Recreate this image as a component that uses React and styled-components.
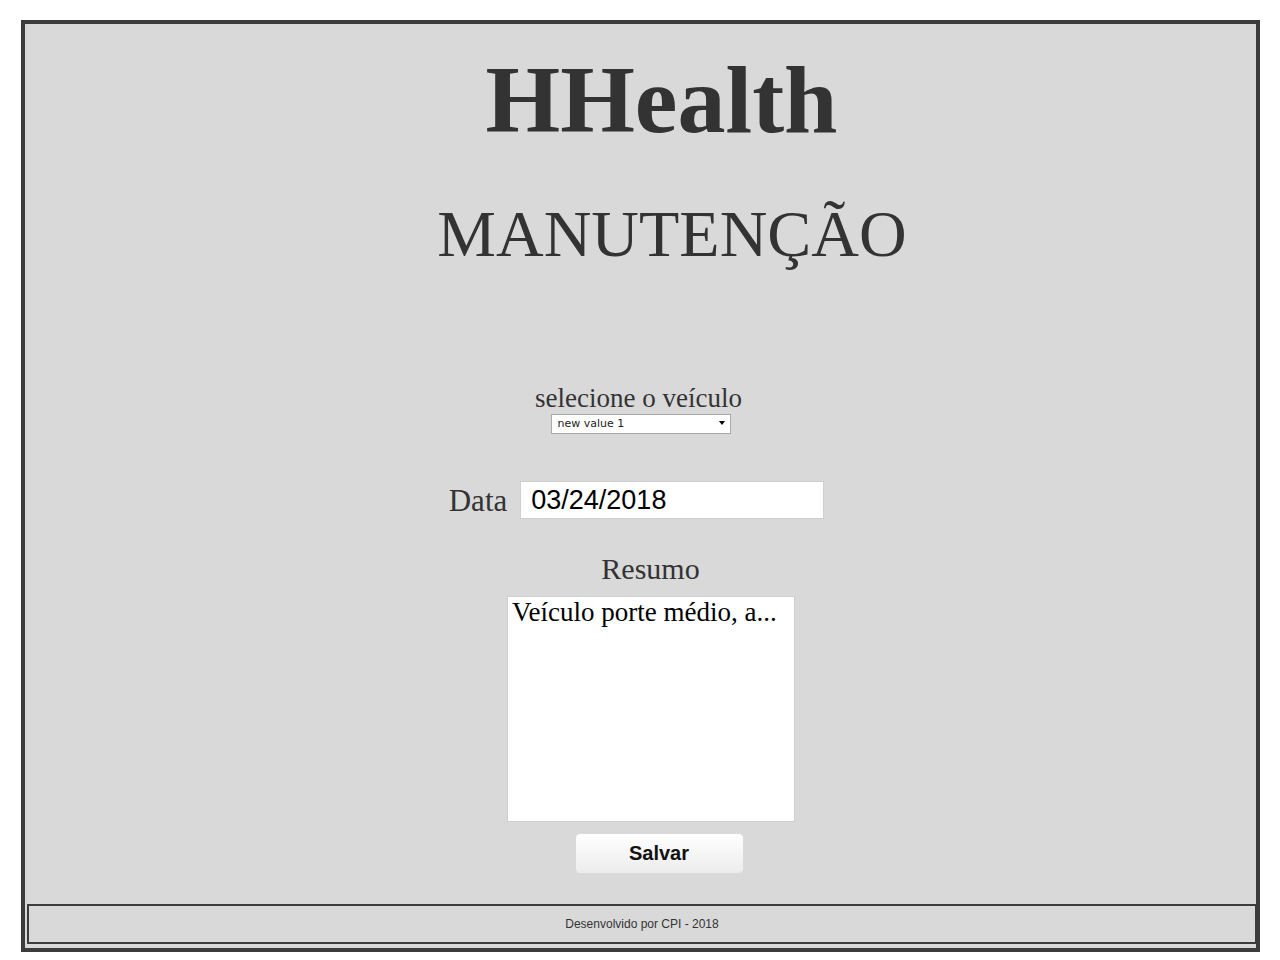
import React from "react";
import styled, { createGlobalStyle } from "styled-components";

const Global = createGlobalStyle`
  html, body { margin: 0; padding: 0; background: #ffffff; }
  body { font-family: "Liberation Serif", "Times New Roman", serif; }
  * { box-sizing: border-box; }
`;

const Frame = styled.div`
  margin: 20px 0 8px 21px;
  width: 1239px;
  height: 932px;
  border: 4px solid #3c3c3c;
  background: #d9d9d9;
  display: flex;
  flex-direction: column;
`;

const Main = styled.main`
  flex: 1;
  display: flex;
  flex-direction: column;
  align-items: center;
  text-align: center;
`;

const Title = styled.h1`
  margin: 28px 0 0;
  padding-left: 42px;
  font-family: "Liberation Serif", "Times New Roman", serif;
  font-weight: 700;
  font-size: 96px;
  line-height: 96px;
  color: #333333;
`;

const Subtitle = styled.h2`
  margin: 53px 0 0;
  padding-left: 63px;
  font-family: "Liberation Serif", "Times New Roman", serif;
  font-weight: 400;
  font-size: 66px;
  line-height: 66px;
  color: #333333;
`;

const FieldLabel = styled.label`
  display: block;
  font-family: "Liberation Serif", "Times New Roman", serif;
  font-size: ${(p) => p.$size}px;
  line-height: ${(p) => p.$size}px;
  color: #333333;
  margin-top: ${(p) => p.$top || 0}px;
  padding-left: ${(p) => p.$pl || 0}px;
  padding-right: ${(p) => p.$pr || 0}px;
`;

const SelectWrap = styled.div`
  position: relative;
  margin-top: 1px;
  width: 180px;
  height: 20px;
`;

const Select = styled.select`
  appearance: none;
  -webkit-appearance: none;
  width: 180px;
  height: 20px;
  border: 1px solid #a9a9a9;
  background: #ffffff;
  padding: 0 0 0 6px;
  font-family: "DejaVu Sans", Verdana, sans-serif;
  font-size: 11px;
  color: #222222;
  outline: none;
`;

const Arrow = styled.span`
  position: absolute;
  right: 6px;
  top: 8px;
  width: 0;
  height: 0;
  border-left: 3.5px solid transparent;
  border-right: 3.5px solid transparent;
  border-top: 4px solid #000000;
  pointer-events: none;
`;

const DateRow = styled.div`
  display: flex;
  align-items: center;
  gap: 13px;
  margin-top: 48px;
  padding-right: 8px;
`;

const DateInput = styled.input`
  width: 304px;
  height: 38px;
  border: 1px solid #cfcfcf;
  background: #ffffff;
  padding: 0 10px;
  font-family: "Liberation Sans", Arial, sans-serif;
  font-size: 27px;
  color: #000000;
  outline: none;
`;

const Summary = styled.textarea`
  margin-top: 12px;
  margin-left: 21px;
  width: 288px;
  height: 226px;
  border: 1px solid #cfcfcf;
  background: #ffffff;
  padding: 0 4px;
  resize: none;
  font-family: "Liberation Serif", "Times New Roman", serif;
  font-size: 27px;
  line-height: 30px;
  color: #000000;
  outline: none;
`;

const SaveButton = styled.button`
  margin-top: 11px;
  margin-left: 37px;
  width: 169px;
  height: 41px;
  border: 1px solid #dadada;
  border-radius: 5px;
  background: linear-gradient(#ffffff, #ececec);
  font-family: "Liberation Sans", Arial, sans-serif;
  font-weight: 700;
  font-size: 20px;
  color: #111111;
  cursor: pointer;
`;

const Footer = styled.footer`
  margin: 0 0 4px 2px;
  width: 1230px;
  height: 40px;
  border: 2px solid #3c3c3c;
  display: flex;
  align-items: center;
  justify-content: center;
  font-family: "Liberation Sans", Arial, sans-serif;
  font-size: 12px;
  color: #333333;
`;

export default function App() {
  return (
    <>
      <Global />
      <Frame>
        <Main>
          <Title>HHealth</Title>
          <Subtitle>MANUTENÇÃO</Subtitle>
          <FieldLabel $size={27} $top={118} $pr={4} htmlFor="veiculo">
            selecione o veículo
          </FieldLabel>
          <SelectWrap>
            <Select id="veiculo" defaultValue="1">
              <option value="1">new value 1</option>
              <option value="2">new value 2</option>
            </Select>
            <Arrow />
          </SelectWrap>
          <DateRow>
            <FieldLabel $size={31} htmlFor="data">
              Data
            </FieldLabel>
            <DateInput id="data" type="text" defaultValue="03/24/2018" />
          </DateRow>
          <FieldLabel $size={30} $top={35} $pl={20} htmlFor="resumo">
            Resumo
          </FieldLabel>
          <Summary id="resumo" defaultValue="Veículo porte médio, a..." />
          <SaveButton type="button">Salvar</SaveButton>
        </Main>
        <Footer>Desenvolvido por CPI - 2018</Footer>
      </Frame>
    </>
  );
}
